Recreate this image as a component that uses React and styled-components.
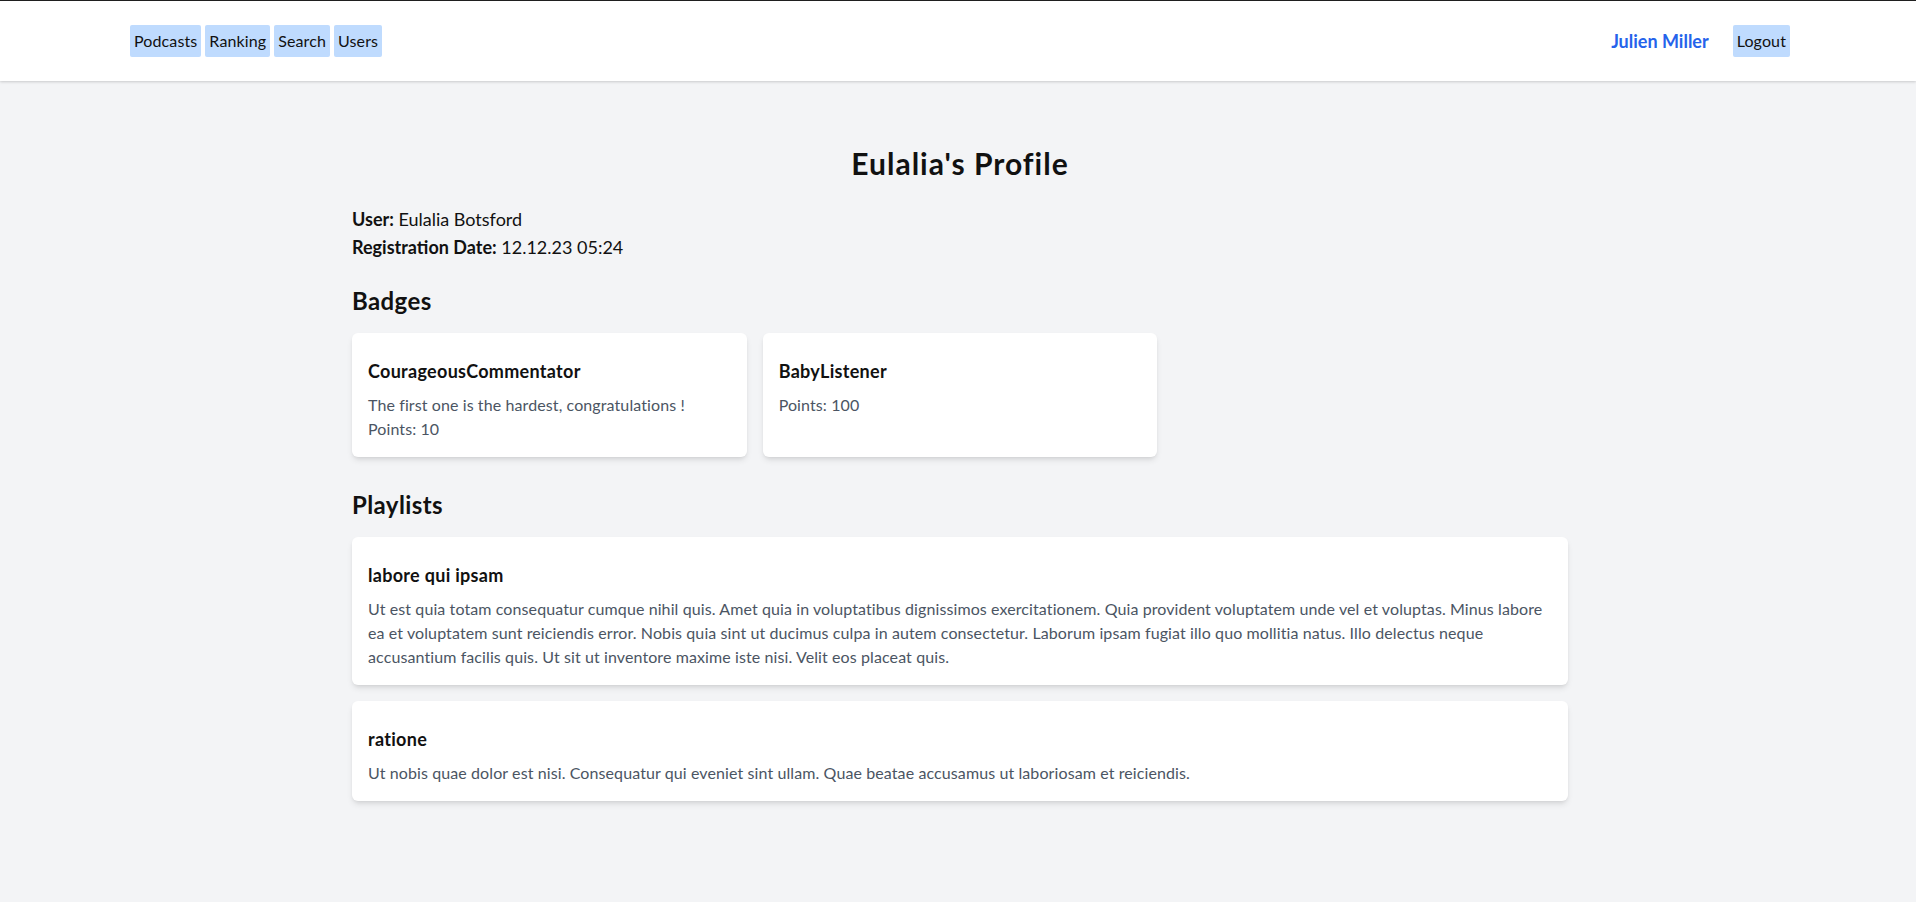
import React from "react";
import styled, { createGlobalStyle } from "styled-components";

const Global = createGlobalStyle`
  html, body { margin: 0; padding: 0; }
  body {
    background: #f3f4f6;
    font-family: Lato, "Noto Sans", sans-serif;
    color: #111;
    min-height: 902px;
  }
  * { box-sizing: border-box; }
`;

const Nav = styled.nav`
  background: #fff;
  border-top: 1px solid #1f1f1f;
  box-shadow: 0 1px 3px rgba(0,0,0,0.12), 0 1px 2px rgba(0,0,0,0.06);
  padding: 24px 126px 24px 130px;
  display: flex;
  align-items: center;
  justify-content: space-between;
`;

const NavGroup = styled.div`
  display: flex;
  align-items: center;
  gap: ${(p) => p.$gap || 4}px;
`;

const NavButton = styled.a`
  display: inline-block;
  background: #bfdbfe;
  color: #111;
  font-size: 16px;
  line-height: 24px;
  letter-spacing: 0.12px;
  padding: 4px 4px;
  border-radius: 2px;
  text-decoration: none;
`;

const UserLink = styled.a`
  color: #2563eb;
  font-weight: 700;
  font-size: 18px;
  line-height: 24px;
  text-decoration: none;
`;

const Main = styled.main`
  max-width: 1280px;
  margin: 0 auto;
  padding: 64px 30px 40px 34px;
`;

const Title = styled.h1`
  margin: 0 0 24px;
  text-align: center;
  font-size: 30px;
  line-height: 36px;
  font-weight: 700;
  letter-spacing: 1px;
`;

const InfoLine = styled.p`
  margin: 0;
  font-size: 18px;
  line-height: 28px;
  b { font-weight: 700; }
`;

const SectionTitle = styled.h2`
  margin: ${(p) => p.$top || 24}px 0 16px;
  font-size: 24px;
  line-height: 32px;
  font-weight: 700;
  letter-spacing: 0.4px;
`;

const BadgeGrid = styled.div`
  display: grid;
  grid-template-columns: repeat(3, 1fr);
  gap: 16px;
`;

const List = styled.div`
  display: flex;
  flex-direction: column;
  gap: 16px;
`;

const Card = styled.div`
  background: #fff;
  border-radius: 6px;
  box-shadow: 0 4px 6px -1px rgba(0,0,0,0.1), 0 2px 4px -2px rgba(0,0,0,0.1);
  padding: 24px 16px 16px;
`;

const CardTitle = styled.h3`
  margin: 0 0 8px;
  font-size: 18px;
  line-height: 28px;
  font-weight: 700;
  letter-spacing: 0.3px;
`;

const CardText = styled.p`
  margin: 0;
  font-size: 16px;
  line-height: 24px;
  letter-spacing: 0.1px;
  color: #4b5563;
`;

const badges = [
  { name: "CourageousCommentator", desc: "The first one is the hardest, congratulations !", points: 10 },
  { name: "BabyListener", points: 100 },
];

const playlists = [
  {
    name: "labore qui ipsam",
    desc: "Ut est quia totam consequatur cumque nihil quis. Amet quia in voluptatibus dignissimos exercitationem. Quia provident voluptatem unde vel et voluptas. Minus labore ea et voluptatem sunt reiciendis error. Nobis quia sint ut ducimus culpa in autem consectetur. Laborum ipsam fugiat illo quo mollitia natus. Illo delectus neque accusantium facilis quis. Ut sit ut inventore maxime iste nisi. Velit eos placeat quis.",
  },
  {
    name: "ratione",
    desc: "Ut nobis quae dolor est nisi. Consequatur qui eveniet sint ullam. Quae beatae accusamus ut laboriosam et reiciendis.",
  },
];

export default function App() {
  return (
    <>
      <Global />
      <Nav>
        <NavGroup>
          <NavButton href="#">Podcasts</NavButton>
          <NavButton href="#">Ranking</NavButton>
          <NavButton href="#">Search</NavButton>
          <NavButton href="#">Users</NavButton>
        </NavGroup>
        <NavGroup $gap={24}>
          <UserLink href="#">Julien Miller</UserLink>
          <NavButton href="#">Logout</NavButton>
        </NavGroup>
      </Nav>
      <Main>
        <Title>Eulalia's Profile</Title>
        <InfoLine><b>User:</b> Eulalia Botsford</InfoLine>
        <InfoLine><b>Registration Date:</b> 12.12.23 05:24</InfoLine>
        <SectionTitle $top={24}>Badges</SectionTitle>
        <BadgeGrid>
          {badges.map((b) => (
            <Card key={b.name}>
              <CardTitle>{b.name}</CardTitle>
              {b.desc && <CardText>{b.desc}</CardText>}
              <CardText>Points: {b.points}</CardText>
            </Card>
          ))}
        </BadgeGrid>
        <SectionTitle $top={32}>Playlists</SectionTitle>
        <List>
          {playlists.map((p) => (
            <Card key={p.name}>
              <CardTitle>{p.name}</CardTitle>
              <CardText>{p.desc}</CardText>
            </Card>
          ))}
        </List>
      </Main>
    </>
  );
}
